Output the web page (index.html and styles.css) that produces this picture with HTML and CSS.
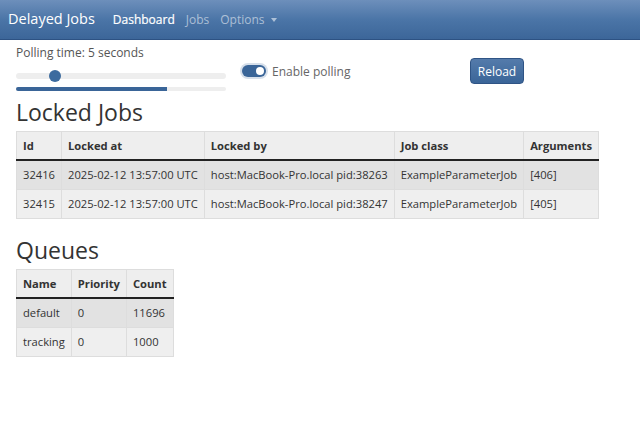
FILE: index.html
```html
<!DOCTYPE html>
<html>
<head>
<meta charset="utf-8">
<link rel="stylesheet" href="styles.css">
</head>
<body>
<nav class="navbar">
  <span class="brand">Delayed Jobs</span>
  <a class="nav-link active">Dashboard</a>
  <a class="nav-link">Jobs</a>
  <a class="nav-link">Options <span class="caret"></span></a>
</nav>
<main class="container">
  <div class="controls">
    <div class="polling">
      <div class="polling-label">Polling time: 5 seconds</div>
      <div class="slider"><div class="thumb"></div></div>
      <div class="progress"><div class="progress-bar" style="width:72%"></div></div>
    </div>
    <label class="switch-wrap">
      <span class="switch"><span class="knob"></span></span>
      <span class="switch-label">Enable polling</span>
    </label>
    <div><button class="btn">Reload</button></div>
  </div>
  <h2 class="heading">Locked Jobs</h2>
  <table class="table">
    <thead>
      <tr><th>Id</th><th>Locked at</th><th>Locked by</th><th>Job class</th><th>Arguments</th></tr>
    </thead>
    <tbody>
      <tr><td>32416</td><td>2025-02-12 13:57:00 UTC</td><td>host:MacBook-Pro.local pid:38263</td><td>ExampleParameterJob</td><td>[406]</td></tr>
      <tr><td>32415</td><td>2025-02-12 13:57:00 UTC</td><td>host:MacBook-Pro.local pid:38247</td><td>ExampleParameterJob</td><td>[405]</td></tr>
    </tbody>
  </table>
  <h2 class="heading queues">Queues</h2>
  <table class="table">
    <thead>
      <tr><th>Name</th><th>Priority</th><th>Count</th></tr>
    </thead>
    <tbody>
      <tr><td>default</td><td>0</td><td>11696</td></tr>
      <tr><td>tracking</td><td>0</td><td>1000</td></tr>
    </tbody>
  </table>
</main>
</body>
</html>
```
FILE: styles.css
```css
html, body {
  margin: 0;
  padding: 0;
  background: #fff;
  font-family: "Open Sans", "Liberation Sans", sans-serif;
  color: #333;
}
.navbar {
  height: 40px;
  box-sizing: border-box;
  display: flex;
  align-items: center;
  padding: 0 8px;
  background: linear-gradient(to bottom, #6d8fbb 0%, #4b75a7 50%, #3c6699 100%);
  border-bottom: 1px solid #2d5283;
}
.brand {
  font-size: 14.5px;
  color: #fff;
  margin-right: 18px;
  padding-bottom: 2px;
}
.nav-link {
  font-size: 12px;
  color: rgba(255,255,255,0.55);
  margin-right: 11px;
  padding-bottom: 1px;
}
.nav-link.active {
  color: #fff;
  -webkit-text-stroke: 0.2px #fff;
}
.caret {
  display: inline-block;
  width: 0;
  height: 0;
  border-left: 3.5px solid transparent;
  border-right: 3.5px solid transparent;
  border-top: 4px solid rgba(255,255,255,0.55);
  vertical-align: middle;
  margin-left: 3px;
}
.container {
  padding: 0 16px;
}
.controls {
  display: grid;
  grid-template-columns: 210px 212px auto;
  column-gap: 16px;
  padding-top: 4px;
}
.polling-label {
  font-size: 12px;
  color: #555;
  line-height: 18px;
}
.slider {
  margin-top: 11px;
  height: 6px;
  border-radius: 3px;
  background: #eee;
  position: relative;
}
.thumb {
  position: absolute;
  left: 33px;
  top: -3px;
  width: 12px;
  height: 12px;
  border-radius: 50%;
  background: #3c6b9f;
}
.progress {
  margin-top: 8px;
  height: 4px;
  border-radius: 2px;
  background: #eee;
  overflow: hidden;
}
.progress-bar {
  height: 100%;
  background: #3a6598;
}
.switch-wrap {
  display: flex;
  align-items: center;
  margin-top: 19px;
  align-self: start;
  height: 16px;
}
.switch {
  width: 24px;
  height: 12px;
  border-radius: 7px;
  background: #3a6598;
  box-shadow: 0 0 0 2px #d6dfea;
  position: relative;
  margin-right: 6px;
}
.knob {
  position: absolute;
  right: 2px;
  top: 2px;
  width: 8px;
  height: 8px;
  border-radius: 50%;
  background: #fff;
}
.switch-label {
  font-size: 12px;
  color: #666;
}
.btn {
  margin-top: 14px;
  width: 54px;
  height: 26px;
  font-family: "Open Sans", sans-serif;
  font-size: 12px;
  color: #fff;
  border: 1px solid #2f5485;
  border-radius: 4px;
  background: linear-gradient(to bottom, #547bab 0%, #3a6598 100%);
  padding: 0;
}
.heading {
  font-size: 23px;
  font-weight: 400;
  margin: 6px 0 4px;
  line-height: 30px;
  color: #333;
}
.heading.queues {
  margin-top: 16px;
}
.table {
  border-collapse: collapse;
  font-size: 11.2px;
}
.table th, .table td {
  border: 1px solid #ddd;
  padding: 5px 6px;
  line-height: 18px;
  text-align: left;
  white-space: nowrap;
}
.table th {
  background: #eee;
  font-weight: 700;
  border-bottom: 2px solid #222;
  padding-top: 5px;
  padding-bottom: 4px;
}
.table tbody tr:nth-child(odd) td {
  background: #e2e2e2;
}
.table tbody tr:nth-child(even) td {
  background: #efefef;
}
.table td {
  color: #333;
}
```
